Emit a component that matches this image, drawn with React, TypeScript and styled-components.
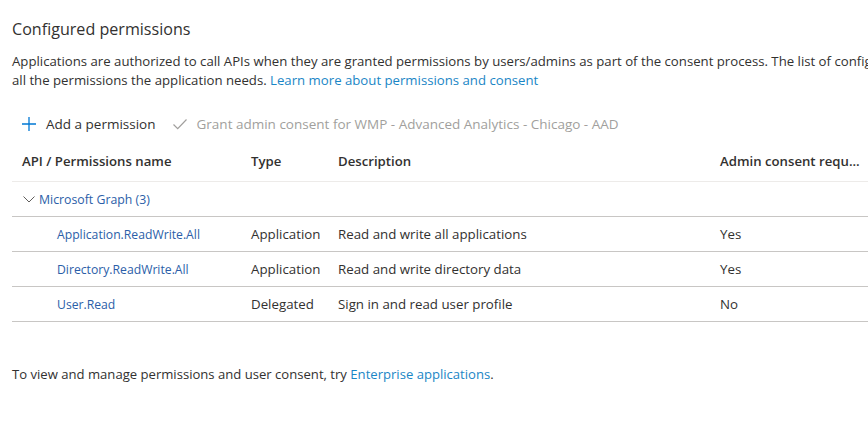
import React from "react";
import styled, { createGlobalStyle } from "styled-components";

const Global = createGlobalStyle`
  html, body { margin: 0; padding: 0; background: #fff; overflow: hidden; }
  body { font-family: "Open Sans", "Noto Sans", Arial, sans-serif; color: #323130; }
`;

const Page = styled.div`
  width: 868px;
  height: 445px;
  overflow: hidden;
  padding: 17px 0 0 12px;
  box-sizing: border-box;
`;

const Title = styled.h2`
  margin: 0;
  font-size: 16.1px;
  font-weight: 400;
  line-height: 24px;
  color: #323130;
`;

const Para = styled.div`
  margin-top: 11px;
  font-size: 13.2px;
  line-height: 19px;
  width: 1100px;
`;

const Line = styled.div`
  white-space: nowrap;
`;

const Link = styled.a<{ $tone?: "teal" | "blue" }>`
  color: ${(p) => (p.$tone === "blue" ? "#2b5ea8" : "#1a86c6")};
  text-decoration: none;
  cursor: pointer;
`;

const Toolbar = styled.div`
  display: flex;
  align-items: center;
  gap: 16px;
  margin-top: 22px;
  padding-left: 9px;
  height: 24px;
`;

const ToolButton = styled.button<{ $disabled?: boolean }>`
  display: flex;
  align-items: center;
  gap: 9px;
  border: 0;
  background: none;
  padding: 0;
  font: inherit;
  font-size: 13.5px;
  color: ${(p) => (p.$disabled ? "#a19f9d" : "#323130")};
  cursor: ${(p) => (p.$disabled ? "default" : "pointer")};
`;

const Table = styled.div`
  margin-top: 5px;
  width: 100%;
`;

const cols = "229px 87px 382px 1fr";

const HeaderRow = styled.div`
  display: grid;
  grid-template-columns: ${cols};
  height: 40px;
  align-items: center;
  border-bottom: 1px solid #edebe9;
  font-size: 13.2px;
  font-weight: 600;
  padding-left: 10px;
`;

const GroupRow = styled.div`
  display: flex;
  align-items: center;
  height: 34px;
  border-bottom: 1px solid #c8c6c4;
  padding-left: 10px;
  gap: 3px;
  font-size: 12.3px;
  color: #2b5ea8;
`;

const Row = styled.div`
  display: grid;
  grid-template-columns: ${cols};
  height: 34px;
  align-items: center;
  border-bottom: 1px solid #c8c6c4;
  font-size: 13.3px;
  padding-left: 10px;
`;

const NameCell = styled.div`
  padding-left: 35px;
  font-size: 12.2px;
`;

const Cell = styled.div`
  white-space: nowrap;
`;

const Footer = styled.div`
  margin-top: 43px;
  font-size: 13.1px;
`;

const PlusIcon = () => (
  <svg width="16" height="16" viewBox="0 0 16 16">
    <path d="M8 1v14M1 8h14" stroke="#0078d4" strokeWidth="1.3" fill="none" />
  </svg>
);

const CheckIcon = () => (
  <svg width="16" height="16" viewBox="0 0 16 16">
    <path d="M1.5 8.5l4.2 4.2L14.5 3.5" stroke="#a19f9d" strokeWidth="1.2" fill="none" />
  </svg>
);

const Chevron = () => (
  <svg width="14" height="10" viewBox="0 0 14 10">
    <path d="M1.5 2.5l5.5 5.5 5.5-5.5" stroke="#605e5c" strokeWidth="1" fill="none" />
  </svg>
);

const perms = [
  { name: "Application.ReadWrite.All", type: "Application", desc: "Read and write all applications", admin: "Yes" },
  { name: "Directory.ReadWrite.All", type: "Application", desc: "Read and write directory data", admin: "Yes" },
  { name: "User.Read", type: "Delegated", desc: "Sign in and read user profile", admin: "No" },
];

export default function App() {
  return (
    <>
      <Global />
      <Page>
        <Title>Configured permissions</Title>
        <Para>
          <Line>
            Applications are authorized to call APIs when they are granted permissions by users/admins as part of the consent process. The list of configured permissions should include
          </Line>
          <Line>
            all the permissions the application needs. <Link>Learn more about permissions and consent</Link>
          </Line>
        </Para>
        <Toolbar>
          <ToolButton>
            <PlusIcon />
            Add a permission
          </ToolButton>
          <ToolButton $disabled>
            <CheckIcon />
            Grant admin consent for WMP - Advanced Analytics - Chicago - AAD
          </ToolButton>
        </Toolbar>
        <Table>
          <HeaderRow>
            <Cell>API / Permissions name</Cell>
            <Cell>Type</Cell>
            <Cell>Description</Cell>
            <Cell>Admin consent requ...</Cell>
          </HeaderRow>
          <GroupRow>
            <Chevron />
            <Link $tone="blue">Microsoft Graph (3)</Link>
          </GroupRow>
          {perms.map((p) => (
            <Row key={p.name}>
              <NameCell>
                <Link $tone="blue">{p.name}</Link>
              </NameCell>
              <Cell>{p.type}</Cell>
              <Cell>{p.desc}</Cell>
              <Cell>{p.admin}</Cell>
            </Row>
          ))}
        </Table>
        <Footer>
          To view and manage permissions and user consent, try <Link>Enterprise applications</Link>.
        </Footer>
      </Page>
    </>
  );
}
